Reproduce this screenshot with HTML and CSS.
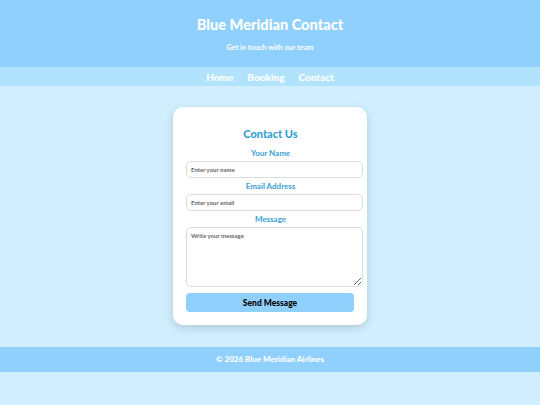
FILE: index.html
```html
<!DOCTYPE html>
<html>
<head>
<meta charset="utf-8">
<link rel="stylesheet" href="styles.css">
</head>
<body>
<header class="header">
  <h1 class="title">Blue Meridian Contact</h1>
  <p class="subtitle">Get in touch with our team</p>
</header>
<nav class="nav">
  <a href="#">Home</a>
  <a href="#">Booking</a>
  <a href="#">Contact</a>
</nav>
<main class="main">
  <form class="card">
    <h2 class="card-title">Contact Us</h2>
    <label class="label">Your Name</label>
    <input class="field" type="text" placeholder="Enter your name">
    <label class="label">Email Address</label>
    <input class="field" type="email" placeholder="Enter your email">
    <label class="label">Message</label>
    <textarea class="field area" placeholder="Write your message"></textarea>
    <button class="btn" type="button">Send Message</button>
  </form>
</main>
<footer class="footer">© 2026 Blue Meridian Airlines</footer>
</body>
</html>
```
FILE: styles.css
```css
* { box-sizing: border-box; }
body {
  margin: 0;
  background: #d1eefe;
  font-family: Lato, "Open Sans", sans-serif;
  font-weight: 700;
}
.header {
  background: #90d0fc;
  height: 67px;
  text-align: center;
  color: #fff;
  padding-top: 16px;
}
.title {
  margin: 0;
  font-size: 14.6px;
  font-weight: 900;
  line-height: 18px;
}
.subtitle {
  margin: 9px 0 0;
  font-size: 7.3px;
  line-height: 10px;
}
.nav {
  background: #b2e3fd;
  height: 19px;
  display: flex;
  justify-content: center;
  align-items: center;
  gap: 14px;
}
.nav a {
  color: #fff;
  text-decoration: none;
  font-size: 10px;
  font-weight: 900;
}
.main {
  padding: 21px 0 22px;
  display: flex;
  justify-content: center;
}
.card {
  width: 194px;
  height: 218px;
  background: #fff;
  border-radius: 10px;
  box-shadow: 0 3px 8px rgba(0,0,0,0.15);
  padding: 20px 12px 0 13px;
  display: flex;
  flex-direction: column;
}
.card-title {
  margin: 0 0 7px;
  text-align: center;
  color: #3a9fd2;
  font-size: 11px;
  font-weight: 900;
  line-height: 14px;
}
.label {
  text-align: center;
  color: #3a9fd2;
  font-size: 8px;
  line-height: 10px;
  margin-bottom: 3px;
}
.field {
  width: 177px;
  height: 17px;
  flex: none;
  border: 1px solid #d8dde0;
  border-radius: 5px;
  padding: 0 4px;
  font-family: inherit;
  font-weight: 700;
  font-size: 6px;
  color: #555;
  margin: 0 0 3px;
  background: #fff;
}
.field::placeholder { color: #666; }
.area {
  height: 60px;
  padding-top: 4px;
  resize: vertical;
  margin-bottom: 6px;
}
.btn {
  width: 168px;
  height: 19px;
  flex: none;
  border: none;
  border-radius: 4px;
  background: #90d0fc;
  color: #000;
  font-family: inherit;
  font-weight: 900;
  font-size: 8.5px;
}
.footer {
  background: #90d0fc;
  height: 25px;
  color: #fff;
  text-align: center;
  font-size: 8px;
  font-weight: 900;
  line-height: 25px;
}
```
